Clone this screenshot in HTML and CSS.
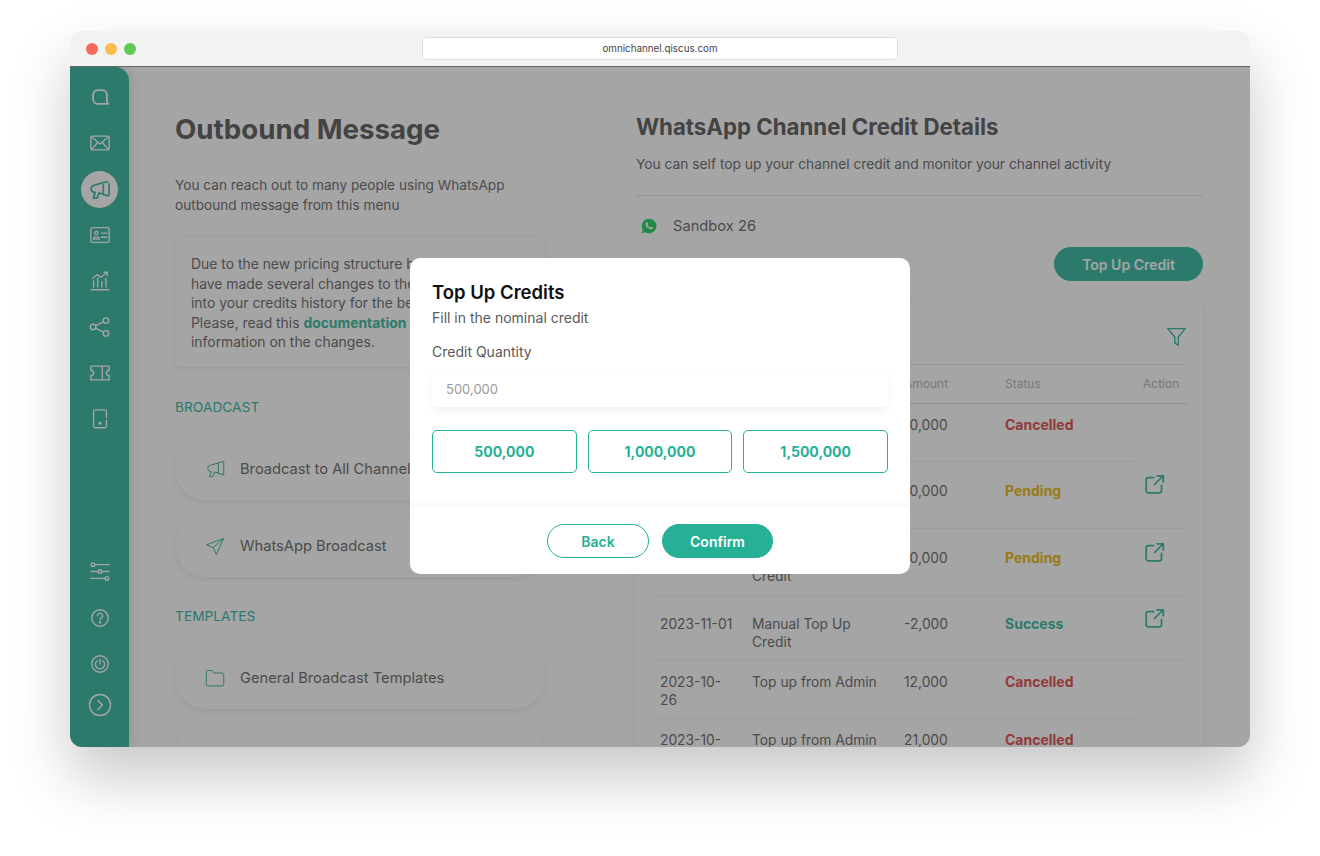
FILE: index.html
```html
<!DOCTYPE html>
<html lang="en">
<head>
    <meta charset="UTF-8">
    <meta name="viewport" content="width=device-width, initial-scale=1.0">
    <title>Outbound Message</title>
    <link rel="stylesheet" href="styles.css">
</head>
<body>

<div class="window">
    <div class="titlebar">
        <div class="dots">
            <span class="dot dot-red"></span>
            <span class="dot dot-yellow"></span>
            <span class="dot dot-green"></span>
        </div>
        <div class="address">omnichannel.qiscus.com</div>
    </div>

    <div class="app">
        <div class="sidebar">
            <div class="nav-group">
                <div class="nav-item">
                    <svg class="nav-icon icon-heavy" viewBox="0 0 24 24"><path d="M9.5 4.5h5a5 5 0 0 1 5 5v5c0 2 .4 3.6 1.2 5H9.5a5 5 0 0 1-5-5v-5a5 5 0 0 1 5-5z"/></svg>
                </div>
                <div class="nav-item">
                    <svg class="nav-icon" viewBox="0 0 24 24"><rect x="2" y="4.5" width="20" height="15" rx="1.5"/><path d="M3 5.5l9 7.5 9-7.5M3 19l6.5-7.5M21 19l-6.5-7.5"/></svg>
                </div>
                <div class="nav-item active">
                    <svg class="nav-icon" viewBox="0 0 24 24"><path d="M22 3L6.5 7.500a3.800 3.800 0 0 0 0 7.500h1L5.500 21h4l2-5.500L22 19zM16 5v12"/></svg>
                </div>
                <div class="nav-item">
                    <svg class="nav-icon" viewBox="0 0 24 24"><rect x="2" y="4" width="20" height="16" rx="2"/><circle cx="8" cy="9.8" r="1.8"/><path d="M4.8 16.5c0-3.200 6.400-3.200 6.400 0zM13.5 10H19.5M13.5 14.5H19.5"/></svg>
                </div>
                <div class="nav-item">
                    <svg class="nav-icon" viewBox="0 0 24 24"><path d="M2.5 21.5h19M5 18.5v-7M9.5 18.5V9M14 18.5v-6M18.5 18.5V9M4 9l5-4 4 3 7-5.5M16.5 2.5H20V6"/></svg>
                </div>
                <div class="nav-item">
                    <svg class="nav-icon" viewBox="0 0 24 24"><circle cx="4.5" cy="12" r="3"/><circle cx="18.5" cy="5" r="3"/><circle cx="18.5" cy="19" r="3"/><path d="M7.5 10.500l8.300-4.200M7.5 13.500l8.300 4.200"/></svg>
                </div>
                <div class="nav-item">
                    <svg class="nav-icon" viewBox="0 0 24 24"><path d="M2 4.5h20V9a3 3 0 0 0 0 6v4.5H2V15a3 3 0 0 0 0-6zM14.5 4.5v15"/></svg>
                </div>
                <div class="nav-item">
                    <svg class="nav-icon" viewBox="0 0 24 24"><path d="M19 13.5V20a1.5 1.5 0 0 1-1.5 1.5h-11A1.5 1.5 0 0 1 5 20V3.5A1.5 1.5 0 0 1 6.5 2h11A1.5 1.5 0 0 1 19 3.5v7"/><circle cx="12" cy="16.5" r="1" class="fill"/></svg>
                </div>
            </div>
            <div class="nav-group">
                <div class="nav-item">
                    <svg class="nav-icon" viewBox="0 0 24 24"><circle cx="4.5" cy="4" r="2"/><circle cx="12" cy="11.5" r="2"/><circle cx="19.5" cy="19" r="2"/><path d="M6.5 4H22M2 11.5H10M14 11.5h8M2 19H17.5"/></svg>
                </div>
                <div class="nav-item">
                    <svg class="nav-icon" viewBox="0 0 24 24"><circle cx="12" cy="12" r="9"/><path d="M9.3 9.5a2.800 2.800 0 1 1 4.300 2.400c-1 .6-1.600 1.200-1.600 2.300"/><circle cx="12" cy="17" r=".6" class="fill"/></svg>
                </div>
                <div class="nav-item">
                    <svg class="nav-icon" viewBox="0 0 24 24"><circle cx="12" cy="12" r="9"/><path d="M8.8 8.500a5 5 0 1 0 6.400 0M12 6.500V12"/></svg>
                </div>
                <div class="nav-item nav-last">
                    <svg class="nav-icon" viewBox="0 0 24 24"><circle cx="12" cy="12" r="10.5"/><path d="M10 7.500l4.500 4.500-4.500 4.500"/></svg>
                </div>
            </div>
        </div>

        <div class="main">
            <div class="left-panel">
                <h1 class="page-title">Outbound Message</h1>
                <p class="page-desc">You can reach out to many people using WhatsApp outbound message from this menu</p>
                <div class="note">
                    Due to the new pricing structure by WhatsApp, we<br>
                    have made several changes to the way we record<br>
                    into your credits history for the better experience.<br>
                    Please, read this <a class="note-link">documentation</a> for more<br>
                    information on the changes.
                </div>

                <div class="section-label">BROADCAST</div>
                <div class="menu-list">
                    <div class="menu-item">
                        <svg class="menu-icon" viewBox="0 0 24 24"><path d="M22 3L6.5 7.500a3.800 3.800 0 0 0 0 7.500h1L5.500 21h4l2-5.500L22 19zM16 5v12"/></svg>
                        Broadcast to All Channels
                    </div>
                    <div class="menu-item">
                        <svg class="menu-icon" viewBox="0 0 24 24"><path d="M22 3L2 10.500l8 3.500 3.500 8zM22 3L10 14"/></svg>
                        WhatsApp Broadcast
                    </div>
                </div>

                <div class="section-label section-gap">TEMPLATES</div>
                <div class="menu-list">
                    <div class="menu-item">
                        <svg class="menu-icon" viewBox="0 0 24 24"><path d="M1.5 4.500A1.500 1.500 0 0 1 3 3h5.500l2.200 3H21a1.500 1.500 0 0 1 1.500 1.500V20a1.500 1.500 0 0 1-1.500 1.500H3A1.500 1.500 0 0 1 1.500 20z"/></svg>
                        General Broadcast Templates
                    </div>
                    <div class="menu-item">
                        <svg class="menu-icon" viewBox="0 0 24 24"><path d="M1.5 4.500A1.500 1.500 0 0 1 3 3h5.500l2.200 3H21a1.500 1.500 0 0 1 1.500 1.500V20a1.500 1.500 0 0 1-1.500 1.500H3A1.500 1.500 0 0 1 1.500 20z"/></svg>
                        WhatsApp Templates
                    </div>
                </div>
            </div>

            <div class="right-panel">
                <h2 class="detail-title">WhatsApp Channel Credit Details</h2>
                <p class="detail-desc">You can self top up your channel credit and monitor your channel activity</p>

                <div class="channel-row">
                    <svg class="wa-icon" viewBox="0 0 24 24"><path class="wa-bg" d="M12 1a11 11 0 0 0-9.400 16.600L1 23l5.600-1.500A11 11 0 1 0 12 1z"/><path class="wa-phone" d="M8.500 6.500c-.5 0-1.700 1-1.700 2.800 0 2 1.500 4 3.500 5.700 2.200 1.800 4.500 2.500 5.800 2 1.300-.4 1.900-1.600 1.900-2.300 0-.4-2.400-1.700-2.800-1.600-.4.100-1 1.300-1.400 1.300-1 0-3.600-2.300-4-3.500 0-.4 1-1 1-1.500 0-.5-1-2.900-1.300-2.900z"/></svg>
                    Sandbox 26
                </div>

                <div class="action-row">
                    <button class="topup-button">Top Up Credit</button>
                </div>

                <div class="card">
                    <div class="card-header">
                        <span class="card-title">Credit History</span>
                        <svg class="filter-icon" viewBox="0 0 24 24"><path d="M2 3h20l-8 9.500V22l-4-2.500v-7z"/></svg>
                    </div>
                    <table class="credit-table">
                        <thead>
                            <tr>
                                <th class="col-date">Date</th>
                                <th class="col-desc">Description</th>
                                <th class="col-amount">Amount</th>
                                <th class="col-status">Status</th>
                                <th class="col-action">Action</th>
                            </tr>
                        </thead>
                        <tbody>
                            <tr class="row-short">
                                <td>2023-11-26</td>
                                <td>Manual Top Up Credit</td>
                                <td>10,000</td>
                                <td class="status-cancelled">Cancelled</td>
                                <td class="no-line"></td>
                            </tr>
                            <tr>
                                <td>2023-11-26</td>
                                <td>Manual Top Up Credit</td>
                                <td>10,000</td>
                                <td class="status-pending">Pending</td>
                                <td><svg class="link-icon" viewBox="0 0 24 24"><path d="M11 4H5a2.500 2.500 0 0 0-2.500 2.500V19A2.500 2.500 0 0 0 5 21.500h12.500A2.500 2.500 0 0 0 20 19v-6M12 12L22 2M15 2h7v7"/></svg></td>
                            </tr>
                            <tr>
                                <td>2023-11-26</td>
                                <td>Manual Top Up Credit</td>
                                <td>10,000</td>
                                <td class="status-pending">Pending</td>
                                <td><svg class="link-icon" viewBox="0 0 24 24"><path d="M11 4H5a2.500 2.500 0 0 0-2.500 2.500V19A2.500 2.500 0 0 0 5 21.500h12.500A2.500 2.500 0 0 0 20 19v-6M12 12L22 2M15 2h7v7"/></svg></td>
                            </tr>
                            <tr class="row-one-date">
                                <td>2023-11-01</td>
                                <td>Manual Top Up Credit</td>
                                <td>-2,000</td>
                                <td class="status-success">Success</td>
                                <td><svg class="link-icon" viewBox="0 0 24 24"><path d="M11 4H5a2.500 2.500 0 0 0-2.500 2.500V19A2.500 2.500 0 0 0 5 21.500h12.500A2.500 2.500 0 0 0 20 19v-6M12 12L22 2M15 2h7v7"/></svg></td>
                            </tr>
                            <tr class="row-short">
                                <td>2023-10-26</td>
                                <td>Top up from Admin</td>
                                <td>12,000</td>
                                <td class="status-cancelled">Cancelled</td>
                                <td class="no-line"></td>
                            </tr>
                            <tr class="row-short">
                                <td>2023-10-26</td>
                                <td>Top up from Admin</td>
                                <td>21,000</td>
                                <td class="status-cancelled">Cancelled</td>
                                <td class="no-line"></td>
                            </tr>
                        </tbody>
                    </table>
                </div>
            </div>
        </div>

        <div class="overlay">
            <div class="modal">
                <div class="modal-body">
                    <h3 class="modal-title">Top Up Credits</h3>
                    <p class="modal-sub">Fill in the nominal credit</p>
                    <label class="modal-label" for="credit-input">Credit Quantity</label>
                    <input class="modal-input" id="credit-input" type="text" placeholder="500,000">
                    <div class="quick-grid">
                        <button class="quick-button">500,000</button>
                        <button class="quick-button">1,000,000</button>
                        <button class="quick-button">1,500,000</button>
                    </div>
                </div>
                <div class="modal-footer">
                    <button class="btn btn-back">Back</button>
                    <button class="btn btn-confirm">Confirm</button>
                </div>
            </div>
        </div>
    </div>
</div>

</body>
</html>
```

FILE: styles.css
```css
* {
    margin: 0;
    padding: 0;
    box-sizing: border-box;
    font-family: Inter, "Liberation Sans", sans-serif;
}

body {
    background: #ffffff;
    padding: 31px 70px 0;
    height: 856px;
    overflow: hidden;
}

.window {
    height: 716px;
    border-radius: 12px;
    display: flex;
    flex-direction: column;
    overflow: hidden;
    box-shadow: 0 30px 60px rgba(0, 0, 0, 0.22);
}

/* browser bar */
.titlebar {
    height: 36px;
    background: #f2f2f2;
    border-bottom: 1px solid #666;
    display: flex;
    align-items: center;
    justify-content: center;
    position: relative;
    flex-shrink: 0;
}

.dots {
    position: absolute;
    left: 16px;
    top: 12px;
    display: flex;
    gap: 7px;
}

.dot {
    width: 12px;
    height: 12px;
    border-radius: 50%;
}

.dot-red { background: #f46a5e; }
.dot-yellow { background: #f9bd4d; }
.dot-green { background: #62c955; }

.address {
    width: 476px;
    height: 23px;
    margin-top: -1px;
    background: #fff;
    border: 1px solid #dcdcdc;
    border-radius: 5px;
    font-size: 9.8px;
    line-height: 21px;
    text-align: center;
    color: #444;
}

/* app */
.app {
    flex: 1;
    display: flex;
    position: relative;
    overflow: hidden;
    background: #fff;
}

.sidebar {
    width: 59px;
    flex-shrink: 0;
    background: #35b79e;
    border-top-right-radius: 14px;
    padding-top: 7px;
    padding-bottom: 24px;
    display: flex;
    flex-direction: column;
    justify-content: space-between;
    box-shadow: 3px 0 10px rgba(0, 0, 0, 0.1);
    position: relative;
}

.nav-item {
    height: 46px;
    display: flex;
    align-items: center;
    justify-content: center;
}

.nav-last {
    height: 36px;
}

.nav-icon {
    width: 22px;
    height: 22px;
    fill: none;
    stroke: #fff;
    stroke-width: 1.5;
    stroke-linecap: round;
    stroke-linejoin: round;
}

.icon-heavy {
    stroke-width: 2;
}

.nav-icon .fill {
    fill: #fff;
}

.nav-item.active .nav-icon {
    width: 37px;
    height: 37px;
    padding: 7px;
    background: #fff;
    border-radius: 50%;
    stroke: #35b79e;
    stroke-width: 1.7;
}

.nav-last .nav-icon {
    width: 24px;
    height: 24px;
}

.main {
    flex: 1;
    display: flex;
    padding-left: 46px;
    gap: 91px;
    overflow: hidden;
}

/* left column */
.left-panel {
    width: 370px;
    flex-shrink: 0;
    padding-top: 45px;
}

.page-title {
    font-size: 27.7px;
    line-height: 34px;
    font-weight: 700;
    color: #5c5c5c;
}

.page-desc {
    margin-top: 29px;
    font-size: 13.65px;
    line-height: 20px;
    color: #6a6a6a;
}

.note {
    margin-top: 22px;
    height: 130px;
    padding: 18px 16px 0;
    font-size: 13.9px;
    line-height: 19.5px;
    color: #6a6a6a;
    border-radius: 4px;
    box-shadow: 0 1px 6px rgba(0, 0, 0, 0.08);
}

.note-link {
    color: #35b79e;
    font-weight: 700;
}

.section-label {
    margin-top: 31px;
    font-size: 13.75px;
    line-height: 18px;
    color: #35b79e;
}

.section-gap {
    margin-top: 30px;
}

.menu-list {
    margin-top: 22px;
    display: flex;
    flex-direction: column;
    gap: 15px;
}

.menu-item {
    height: 62px;
    flex-shrink: 0;
    border-radius: 31px;
    padding-left: 30px;
    display: flex;
    align-items: center;
    gap: 15px;
    font-size: 14.7px;
    color: #6a6a6a;
    box-shadow: 0 2px 7px rgba(0, 0, 0, 0.08);
}

.menu-icon {
    width: 20px;
    height: 20px;
    flex-shrink: 0;
    fill: none;
    stroke: #35b79e;
    stroke-width: 1.2;
    stroke-linejoin: round;
    stroke-linecap: round;
}

/* right column */
.right-panel {
    width: 567px;
    flex-shrink: 0;
    padding-top: 46px;
}

.detail-title {
    font-size: 22.25px;
    line-height: 28px;
    font-weight: 700;
    color: #5c5c5c;
}

.detail-desc {
    margin-top: 13px;
    padding-bottom: 21px;
    border-bottom: 1px solid #e6e6e6;
    font-size: 13.77px;
    line-height: 20px;
    color: #6a6a6a;
}

.channel-row {
    margin-top: 20px;
    padding-left: 5px;
    height: 20px;
    display: flex;
    align-items: center;
    gap: 16px;
    font-size: 14.7px;
    color: #6a6a6a;
}

.wa-icon {
    width: 16px;
    height: 16px;
}

.wa-bg { fill: #25d366; }
.wa-phone { fill: #fff; }

.action-row {
    margin-top: 11px;
    display: flex;
    justify-content: flex-end;
}

.topup-button {
    width: 149px;
    height: 34px;
    border: none;
    border-radius: 17px;
    background: #35b79e;
    color: #fff;
    font-size: 14px;
    font-weight: 600;
}

.card {
    margin-top: 22px;
    padding: 0 16px;
    border-radius: 5px;
    box-shadow: 0 1px 8px rgba(0, 0, 0, 0.08);
}

.card-header {
    height: 62px;
    display: flex;
    align-items: center;
    justify-content: space-between;
    padding-top: 6px;
    border-bottom: 1px solid #ececec;
    font-size: 14px;
    color: #6a6a6a;
}

.filter-icon {
    width: 21px;
    height: 21px;
    fill: none;
    stroke: #35b79e;
    stroke-width: 1.6;
    stroke-linejoin: round;
}

.credit-table {
    width: 535px;
    table-layout: fixed;
    border-collapse: collapse;
    font-size: 13.8px;
    line-height: 18px;
    color: #6a6a6a;
}

.credit-table th {
    height: 38px;
    padding-left: 8px;
    text-align: left;
    font-size: 12px;
    font-weight: 400;
    color: #b4b4b4;
    border-bottom: 1px solid #e0e0e0;
}

.col-date { width: 92px; }
.col-desc { width: 152px; }
.col-amount { width: 101px; }
.col-status { width: 138px; }
.col-action { width: 52px; }

.credit-table td {
    padding: 20px 8px 10px;
    vertical-align: top;
    border-bottom: 1px solid #f0f0f0;
}

.credit-table .row-short td {
    padding-top: 12px;
    padding-bottom: 9px;
}

.credit-table .row-one-date td {
    padding-top: 19px;
    padding-bottom: 9px;
}

.credit-table td.no-line {
    border-bottom: none;
}

.status-cancelled { color: #e24b4b; font-weight: 700; font-size: 14px; }
.status-pending { color: #e8b90c; font-weight: 700; font-size: 14px; }
.status-success { color: #35b79e; font-weight: 700; font-size: 14px; }

.link-icon {
    display: block;
    width: 21px;
    height: 21px;
    margin: -7px 0 0 1px;
    fill: none;
    stroke: #35b79e;
    stroke-width: 2;
    stroke-linecap: round;
    stroke-linejoin: round;
}

/* modal */
.overlay {
    position: absolute;
    inset: 0;
    padding-top: 18px;
    background: rgba(30, 30, 30, 0.4);
    display: flex;
    align-items: center;
    justify-content: center;
}

.modal {
    width: 500px;
    height: 316px;
    background: #fff;
    border-radius: 10px;
    display: flex;
    flex-direction: column;
    overflow: hidden;
}

.modal-body {
    flex: 1;
    padding: 22px 22px 0;
}

.modal-title {
    font-size: 18.5px;
    line-height: 24px;
    font-weight: 600;
    color: #111;
}

.modal-sub {
    margin-top: 5px;
    font-size: 14px;
    line-height: 18px;
    color: #5a5a5a;
}

.modal-label {
    display: block;
    margin-top: 16px;
    font-size: 14px;
    line-height: 18px;
    color: #5a5a5a;
}

.modal-input {
    display: block;
    width: 100%;
    height: 35px;
    margin-top: 11px;
    padding: 0 14px 2px;
    border: none;
    border-radius: 4px;
    outline: none;
    font-size: 13px;
    box-shadow: 0 3px 10px rgba(0, 0, 0, 0.06);
}

.modal-input::placeholder {
    color: #999;
}

.quick-grid {
    margin-top: 23px;
    display: grid;
    grid-template-columns: repeat(3, 1fr);
    gap: 11px;
}

.quick-button {
    height: 43px;
    background: #fff;
    border: 1px solid #26b096;
    border-radius: 5px;
    color: #26b096;
    font-size: 14px;
    font-weight: 700;
}

.modal-footer {
    height: 67px;
    flex-shrink: 0;
    display: flex;
    justify-content: center;
    gap: 13px;
    padding-top: 17px;
    box-shadow: 0 -3px 6px rgba(0, 0, 0, 0.04);
}

.btn {
    height: 34px;
    border-radius: 17px;
    font-size: 14px;
    font-weight: 600;
    border: 1px solid #26b096;
}

.btn-back {
    width: 102px;
    background: #fff;
    color: #26b096;
}

.btn-confirm {
    width: 111px;
    background: #26b096;
    color: #fff;
}
```
